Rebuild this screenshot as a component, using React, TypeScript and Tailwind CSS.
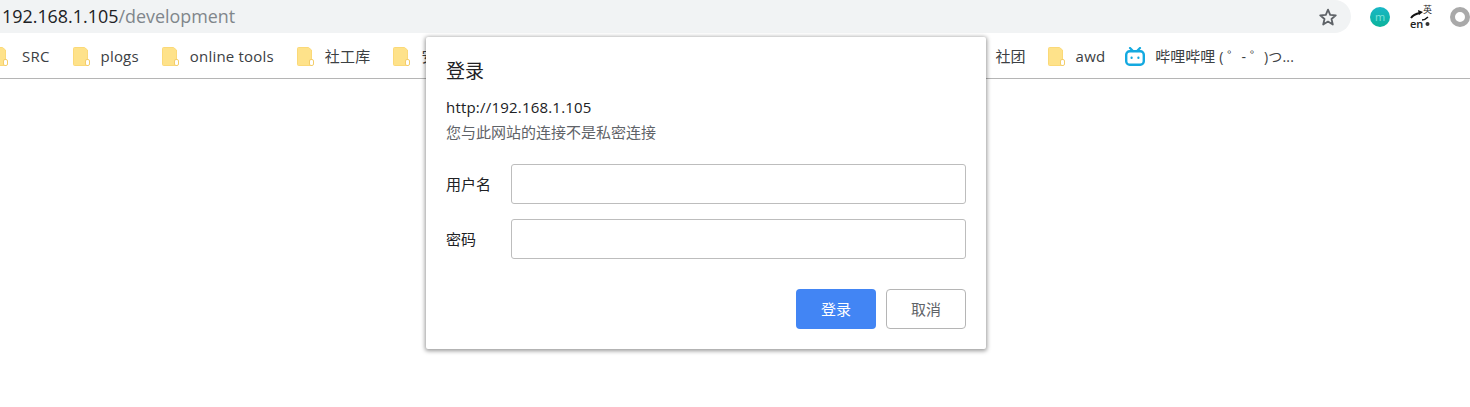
const font = "font-['Open_Sans','Noto_Sans_CJK_SC',sans-serif]";

function Folder() {
  return (
    <svg width="17" height="19" viewBox="0 0 17 19" className="shrink-0">
      <path d="M1.5 0.5H11.5L14.5 3V17.5a1 1 0 0 1-1 1H1.5a1 1 0 0 1-1-1V1.5a1 1 0 0 1 1-1Z" fill="#fee28a" stroke="#fbd978" />
      <rect x="12.5" y="12.5" width="4" height="6" rx="1.5" fill="#fff" stroke="#f3cd6b" />
    </svg>
  );
}

function Bookmark({ label, gap = "gap-[11px]" }: { label: string; gap?: string }) {
  return (
    <div className={`flex items-center ${gap} shrink-0`}>
      <Folder />
      <span className="text-[15px] tracking-[0.2px] text-[#3c4043]">{label}</span>
    </div>
  );
}

function BiliIcon() {
  return (
    <svg width="20" height="19" viewBox="0 0 20 19" className="shrink-0">
      <path d="M5 1l3 3M15 1l-3 3" stroke="#14a9e0" strokeWidth="2.2" strokeLinecap="round" />
      <rect x="1.2" y="4.2" width="17.6" height="13.6" rx="3.5" fill="none" stroke="#14a9e0" strokeWidth="2.4" />
      <rect x="5.5" y="9.5" width="2.2" height="2.4" rx="1" fill="#14a9e0" />
      <rect x="12.3" y="9.5" width="2.2" height="2.4" rx="1" fill="#14a9e0" />
    </svg>
  );
}

function StarIcon() {
  return (
    <svg width="20" height="20" viewBox="0 0 20 20">
      <path
        d="M10 2.6l2.2 5.2 5.6.5-4.3 3.7 1.3 5.5L10 14.6l-4.8 2.9 1.3-5.5-4.3-3.7 5.6-.5Z"
        fill="none"
        stroke="#5f6368"
        strokeWidth="1.8"
        strokeLinejoin="round"
      />
    </svg>
  );
}

function TranslateIcon() {
  return (
    <div className="relative h-[22px] w-[22px] shrink-0">
      <span className="absolute right-0 top-[-1px] text-[9px] leading-[10px] text-[#222]">英</span>
      <span className="absolute bottom-[-1px] left-0 text-[11px] leading-[10px] font-semibold text-[#222]">en</span>
      <svg width="22" height="22" viewBox="0 0 22 22" className="absolute inset-0">
        <path d="M1 12c2-3 4-4 9-5" stroke="#111" strokeWidth="2" fill="none" />
        <path d="M8 4l5 2-4 3Z" fill="#111" />
        <path d="M12 14c2 0 4-1 6-3" stroke="#111" strokeWidth="1.5" fill="none" />
        <circle cx="17.5" cy="18" r="2" fill="#333" />
      </svg>
    </div>
  );
}

function Field({ label }: { label: string }) {
  return (
    <div className="flex h-[40px] items-center">
      <span className="w-[65px] text-[15px] text-[#202124]">{label}</span>
      <div className="h-full flex-1 rounded-[3px] border border-[#bdbdbd] bg-white" />
    </div>
  );
}

export default function App() {
  return (
    <div className={`relative h-[407px] w-[1470px] overflow-hidden bg-white ${font}`}>
      {/* address row */}
      <div className="flex h-[33px] items-center">
        <div className="flex h-full w-[1351px] items-center justify-between rounded-r-[17px] bg-[#f1f3f4] pl-[2px] pr-[13px]">
          <span className="text-[17.9px] text-[#202124]">
            192.168.1.105<span className="text-[#80868b]">/development</span>
          </span>
          <StarIcon />
        </div>
        <div className="ml-[19px] h-[20px] w-[20px] shrink-0 rounded-full bg-gradient-to-b from-[#19b7c6] to-[#0cb39b] text-center text-[11px] leading-[19px] text-[#7fe3dc]">
          m
        </div>
        <div className="ml-[20px]">
          <TranslateIcon />
        </div>
        <div className="ml-[18px] h-[20px] w-[20px] shrink-0 rounded-full border-[5px] border-[#a9a9a9]" />
      </div>

      {/* bookmarks bar */}
      <div className="flex h-[46px] items-center border-b border-[#b5b5b5] bg-white pt-[1px]">
        <div className="ml-[-9px] flex items-center gap-[23px]">
          <Bookmark label="SRC" gap="gap-[14px]" />
          <Bookmark label="plogs" />
          <Bookmark label="online tools" />
          <Bookmark label="社工库" />
          <Bookmark label="安全" />
        </div>
        <div className="ml-auto mr-[176px] flex items-center">
          <span className="text-[15px] text-[#3c4043]">社团</span>
          <div className="ml-[22px]">
            <Bookmark label="awd" />
          </div>
          <div className="ml-[20px] flex items-center gap-[10px]">
            <BiliIcon />
            <span className="text-[15px] text-[#3c4043]">
              哔哩哔哩 <span className="text-[14px] tracking-[0.15px]">( ゜- ゜)つ...</span>
            </span>
          </div>
        </div>
      </div>

      {/* login dialog */}
      <div className="absolute left-[426px] top-[37px] h-[312px] w-[560px] rounded-[2px] bg-white px-[20px] pt-[19px] shadow-[0_1px_4px_1px_rgba(0,0,0,0.4)]">
        <h1 className="text-[19px] leading-[30px] font-normal text-[#202124]">登录</h1>
        <p className="mt-[11px] text-[15px] leading-[20px] tracking-[0.2px] text-[#202124]">http://192.168.1.105</p>
        <p className="mt-[5px] text-[15px] leading-[20px] text-[#5f6368]">您与此网站的连接不是私密连接</p>
        <div className="mt-[22px] flex flex-col gap-[15px]">
          <Field label="用户名" />
          <Field label="密码" />
        </div>
        <div className="mt-[30px] flex justify-end gap-[10px]">
          <button className="h-[40px] w-[80px] rounded-[4px] bg-[#4285f4] text-[15px] text-white">登录</button>
          <button className="h-[40px] w-[80px] rounded-[4px] border border-[#b5b5b5] bg-white text-[15px] text-[#5f6368]">
            取消
          </button>
        </div>
      </div>
    </div>
  );
}
